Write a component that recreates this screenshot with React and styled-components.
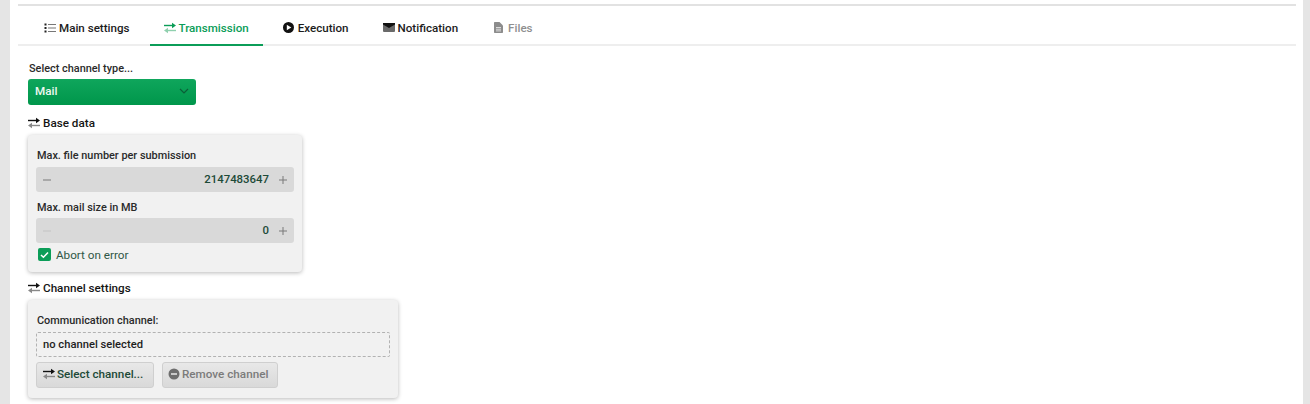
import React from "react";
import styled, { createGlobalStyle } from "styled-components";

const GlobalStyle = createGlobalStyle`
  html, body {
    margin: 0;
    padding: 0;
    background: #e5e5e5;
    height: 404px;
    overflow: hidden;
  }
  body {
    font-family: Roboto, "Liberation Sans", sans-serif;
    font-size: 12px;
    color: #1a1a1a;
  }
`;

const Page = styled.div`
  margin: 0 7px 0 10px;
  height: 404px;
  padding: 4px 7px 0 8px;
  box-sizing: border-box;
  background: #fff;
  overflow: hidden;
`;

const TopRule = styled.div`
  height: 2px;
  background: #e2e2e2;
`;

const TabBar = styled.div`
  display: flex;
  gap: 6px;
  height: 40px;
  padding-left: 12px;
  box-sizing: border-box;
  border-bottom: 2px solid #eeeeee;
`;

const Tab = styled.div`
  display: flex;
  align-items: center;
  gap: ${(p) => p.$gap || 3}px;
  height: 40px;
  margin-left: ${(p) => p.$shift || 0}px;
  padding: 5px 14px 0;
  box-sizing: border-box;
  font-size: 11.6px;
  font-weight: 500;
  color: ${(p) => (p.$active ? "#0b9d58" : p.$disabled ? "#8f8f8f" : "#1c1c1c")};
  border-bottom: 2px solid ${(p) => (p.$active ? "#0b9d58" : "transparent")};
`;

const Content = styled.div`
  padding: 16px 0 0 10px;
`;

const FieldLabel = styled.div`
  font-size: 10.9px;
  font-weight: 500;
  line-height: 14px;
  padding-left: 1px;
  color: #2a2a2a;
`;

const Select = styled.div`
  display: flex;
  align-items: center;
  justify-content: space-between;
  width: 168px;
  height: 26px;
  margin-top: 3px;
  padding: 0 7px 2px;
  box-sizing: border-box;
  border-radius: 3px;
  background: linear-gradient(#0fa65c, #00964b);
  color: #eef8f2;
  font-size: 11.7px;
  font-weight: 500;
`;

const SectionTitle = styled.div`
  display: flex;
  align-items: center;
  gap: 3px;
  height: 14px;
  margin-top: ${(p) => p.$top}px;
  font-size: 11.7px;
  font-weight: 500;
  color: #151515;
`;

const Card = styled.div`
  width: ${(p) => p.$width}px;
  margin-top: 5px;
  padding: 14px 8px ${(p) => p.$bottom}px 8px;
  box-sizing: border-box;
  border-radius: 4px;
  background: #f1f1f1;
  box-shadow: 0 1px 4px rgba(0, 0, 0, 0.28);
`;

const Stepper = styled.div`
  display: flex;
  align-items: center;
  height: 25px;
  margin-top: 4px;
  padding: 0 7px;
  box-sizing: border-box;
  border-radius: 3px;
  background: #d9d9d9;
`;

const StepValue = styled.div`
  flex: 1;
  text-align: right;
  padding: 0 10px 2px 0;
  font-size: 11.4px;
  font-weight: 500;
  color: #1d4a38;
`;

const SpacedLabel = styled(FieldLabel)`
  margin: 9px 0 -1px;
`;

const CheckRow = styled.div`
  display: flex;
  align-items: center;
  gap: 5px;
  margin-top: 5px;
  padding-left: 2px;
  height: 13px;
  font-size: 11.7px;
  color: #2f5746;
`;

const CheckBox = styled.span`
  display: flex;
  align-items: center;
  justify-content: center;
  width: 13px;
  height: 13px;
  border-radius: 2px;
  background: #0b9d58;
`;

const ChannelBox = styled.div`
  display: flex;
  align-items: center;
  height: 25px;
  margin-top: 4px;
  padding: 0 6px;
  box-sizing: border-box;
  border: 1px dashed #b2b2b2;
  border-radius: 2px;
  font-size: 11.2px;
  font-weight: 500;
  color: #1e1e1e;
`;

const ButtonRow = styled.div`
  display: flex;
  gap: 8px;
  margin-top: 5px;
`;

const Button = styled.div`
  display: flex;
  align-items: center;
  gap: 2px;
  width: ${(p) => p.$width}px;
  height: 26px;
  padding: 0 0 2px ${(p) => (p.$disabled ? 5 : 6)}px;
  box-sizing: border-box;
  border-radius: 3px;
  border: 1px solid #cfcfcf;
  background: linear-gradient(#e8e8e8, #d9d9d9);
  font-size: 11.7px;
  font-weight: 500;
  color: ${(p) => (p.$disabled ? "#7b7b7b" : "#1d4a38")};
`;

const ArrowsIcon = ({ top = "#111", bottom = "#888" }) => (
  <svg width="12" height="12" viewBox="0 0 12 12" fill="none">
    <path d="M0 3.5H8.5" stroke={top} strokeWidth="1.4" />
    <path d="M8 .7L12 3.5L8 6.3Z" fill={top} />
    <path d="M12 8.5H3.5" stroke={bottom} strokeWidth="1.4" />
    <path d="M4 5.7L0 8.5L4 11.3Z" fill={bottom} />
  </svg>
);

const ListIcon = () => (
  <svg width="12" height="10" viewBox="0 0 12 10">
    <rect x="0.5" y="0.5" width="2" height="2" fill="#222" />
    <rect x="0.5" y="4" width="2" height="2" fill="#222" />
    <rect x="0.5" y="7.5" width="2" height="2" fill="#222" />
    <rect x="4" y="1" width="8" height="1" fill="#777" />
    <rect x="4" y="4.5" width="8" height="1" fill="#777" />
    <rect x="4" y="8" width="8" height="1" fill="#777" />
  </svg>
);

const PlayIcon = () => (
  <svg width="11" height="11" viewBox="0 0 11 11">
    <circle cx="5.5" cy="5.5" r="5.5" fill="#111" />
    <path d="M3.8 2.8L8.3 5.5L3.8 8.2Z" fill="#fff" />
  </svg>
);

const MailIcon = () => (
  <svg width="12" height="9" viewBox="0 0 12 9">
    <rect width="12" height="9" rx="1" fill="#6a6a6a" />
    <path d="M0 0H12V1.5L6 5L0 1.5Z" fill="#111" />
  </svg>
);

const FileIcon = () => (
  <svg width="9" height="11" viewBox="0 0 9 11">
    <path d="M0 1C0 .4.4 0 1 0H5.5L9 3.5V10C9 10.6 8.6 11 8 11H1C.4 11 0 10.6 0 10Z" fill="#8c8c8c" />
    <path d="M2 5.5H7M2 7.2H7M2 8.9H7" stroke="#fff" strokeWidth="0.7" />
  </svg>
);

const ChevronIcon = () => (
  <svg width="10" height="6" viewBox="0 0 10 6" fill="none">
    <path d="M1 1L5 5L9 1" stroke="#0b5f38" strokeWidth="1.2" />
  </svg>
);

const MinusIcon = ({ color }) => (
  <svg width="8" height="8" viewBox="0 0 8 8">
    <rect y="3.5" width="8" height="1" fill={color} />
  </svg>
);

const PlusIcon = () => (
  <svg width="8" height="8" viewBox="0 0 8 8">
    <rect y="3.5" width="8" height="1" fill="#7a7a7a" />
    <rect x="3.5" width="1" height="8" fill="#7a7a7a" />
  </svg>
);

const CheckIcon = () => (
  <svg width="9" height="8" viewBox="0 0 9 8" fill="none">
    <path d="M1 4L3.4 6.3L8 1.5" stroke="#fff" strokeWidth="1.5" />
  </svg>
);

const RemoveIcon = () => (
  <svg width="12" height="12" viewBox="0 0 12 12">
    <circle cx="6" cy="6" r="5.5" fill="#6e6e6e" />
    <rect x="3" y="5.2" width="6" height="1.6" fill="#e2e2e2" />
  </svg>
);

const App = () => (
  <>
    <GlobalStyle />
    <Page>
      <TopRule />
      <TabBar>
        <Tab>
          <ListIcon />
          Main settings
        </Tab>
        <Tab $active>
          <ArrowsIcon top="#0b9d58" bottom="#8fd0ae" />
          Transmission
        </Tab>
        <Tab $gap={4}>
          <PlayIcon />
          Execution
        </Tab>
        <Tab>
          <MailIcon />
          Notification
        </Tab>
        <Tab $disabled $shift={2} $gap={5}>
          <FileIcon />
          Files
        </Tab>
      </TabBar>
      <Content>
        <FieldLabel>Select channel type...</FieldLabel>
        <Select>
          Mail
          <ChevronIcon />
        </Select>
        <SectionTitle $top={11}>
          <ArrowsIcon />
          Base data
        </SectionTitle>
        <Card $width={274} $bottom={11}>
          <FieldLabel>Max. file number per submission</FieldLabel>
          <Stepper>
            <MinusIcon color="#7a7a7a" />
            <StepValue>2147483647</StepValue>
            <PlusIcon />
          </Stepper>
          <SpacedLabel>Max. mail size in MB</SpacedLabel>
          <Stepper>
            <MinusIcon color="#c4c4c4" />
            <StepValue>0</StepValue>
            <PlusIcon />
          </Stepper>
          <CheckRow>
            <CheckBox>
              <CheckIcon />
            </CheckBox>
            Abort on error
          </CheckRow>
        </Card>
        <SectionTitle $top={9}>
          <ArrowsIcon />
          Channel settings
        </SectionTitle>
        <Card $width={370} $bottom={10}>
          <FieldLabel>Communication channel:</FieldLabel>
          <ChannelBox>no channel selected</ChannelBox>
          <ButtonRow>
            <Button $width={118}>
              <ArrowsIcon />
              Select channel...
            </Button>
            <Button $width={116} $disabled>
              <RemoveIcon />
              Remove channel
            </Button>
          </ButtonRow>
        </Card>
      </Content>
    </Page>
  </>
);

export default App;
